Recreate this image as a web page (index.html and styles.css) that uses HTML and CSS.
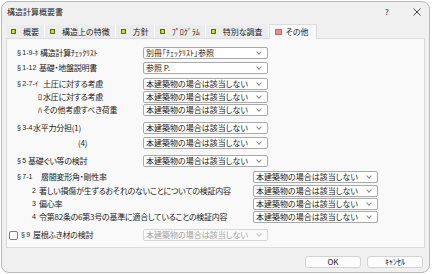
FILE: index.html
```html
<!DOCTYPE html>
<html lang="ja">
<head>
<meta charset="utf-8">
<link rel="stylesheet" href="styles.css">
</head>
<body>
<div class="window">
  <div class="titlebar">
    <span class="title">構造計算概要書</span>
    <span class="help">?</span>
    <span class="close">
      <svg width="8" height="8" viewBox="0 0 8 8"><path d="M0.5 0.5L7.5 7.5M7.5 0.5L0.5 7.5" stroke="#333" stroke-width="0.9" fill="none"/></svg>
    </span>
  </div>
  <div class="tabs">
    <div class="tab"><i class="ico"></i>概要</div>
    <div class="tab"><i class="ico"></i>構造上の特徴</div>
    <div class="tab"><i class="ico"></i>方針</div>
    <div class="tab"><i class="ico"></i>ﾌﾟﾛｸﾞﾗﾑ</div>
    <div class="tab"><i class="ico"></i>特別な調査</div>
    <div class="tab active"><i class="ico red"></i>その他</div>
  </div>
  <div class="panel">
    <div class="row">
      <div class="label"><span class="sec s23">§ 1-9-ﾎ</span>構造計算ﾁｪｯｸﾘｽﾄ</div>
      <div class="select"><span>別冊「ﾁｪｯｸﾘｽﾄ」参照</span></div>
    </div>
    <div class="row mt3">
      <div class="label"><span class="sec s22">§ 1-12</span>基礎・地盤説明書</div>
      <div class="select"><span>参照 P.</span></div>
    </div>
    <div class="row mt4">
      <div class="label"><span class="sec s26">§ 2-7-ｲ</span>土圧に対する考慮</div>
      <div class="select"><span>本建築物の場合は該当しない</span></div>
    </div>
    <div class="row mt1">
      <div class="label"><span class="sec sub">ﾛ</span>水圧に対する考慮</div>
      <div class="select"><span>本建築物の場合は該当しない</span></div>
    </div>
    <div class="row mt1">
      <div class="label"><span class="sec sub">ﾊ</span>その他考慮すべき荷重</div>
      <div class="select"><span>本建築物の場合は該当しない</span></div>
    </div>
    <div class="row mt6">
      <div class="label"><span class="sec s16">§ 3-4</span>水平力分担(1)</div>
      <div class="select"><span>本建築物の場合は該当しない</span></div>
    </div>
    <div class="row mt3">
      <div class="label"><span class="paren">(4)</span></div>
      <div class="select"><span>本建築物の場合は該当しない</span></div>
    </div>
    <div class="row mt6">
      <div class="label"><span class="sec s11">§ 5</span>基礎ぐい等の検討</div>
      <div class="select"><span>本建築物の場合は該当しない</span></div>
    </div>
    <div class="row mt4">
      <div class="label wide"><span class="sec s24">§ 7-1</span>層間変形角・剛性率</div>
      <div class="select"><span>本建築物の場合は該当しない</span></div>
    </div>
    <div class="row mt2">
      <div class="label wide"><span class="sec num">2</span>著しい損傷が生ずるおそれのないことについての検証内容</div>
      <div class="select"><span>本建築物の場合は該当しない</span></div>
    </div>
    <div class="row mt1">
      <div class="label wide"><span class="sec num">3</span>偏心率</div>
      <div class="select"><span>本建築物の場合は該当しない</span></div>
    </div>
    <div class="row mt1">
      <div class="label wide"><span class="sec num">4</span>令第82条の6第3号の基準に適合していることの検証内容</div>
      <div class="select"><span>本建築物の場合は該当しない</span></div>
    </div>
    <div class="row check mt6">
      <div class="label boxed"><span class="checkbox"></span><span class="sec s12">§ 9</span>屋根ふき材の検討</div>
      <div class="select disabled"><span>本建築物の場合は該当しない</span></div>
    </div>
  </div>
  <div class="footer">
    <div class="button">OK</div>
    <div class="button">ｷｬﾝｾﾙ</div>
  </div>
</div>
</body>
</html>
```

FILE: styles.css
```css
* { box-sizing: border-box; }
html, body { margin: 0; padding: 0; background: #ffffff; }
body {
  font-family: "Noto Sans CJK JP", "Noto Sans", sans-serif;
  font-size: 8px;
  color: #1b1b1b;
  font-feature-settings: "palt";
}
.window {
  width: 429px;
  height: 272px;
  margin: 1px 0 0 1px;
  border: 1px solid #b9b9b9;
  border-radius: 8px;
  background: #f0f0f0;
  display: flex;
  flex-direction: column;
  overflow: hidden;
}
.titlebar {
  height: 19px;
  display: flex;
  align-items: center;
  padding-left: 5px;
  flex-shrink: 0;
}
.title { flex: 1; line-height: 12px; }
.help { width: 8px; margin-right: 22px; text-align: center; line-height: 12px; }
.close { width: 8px; height: 8px; margin-right: 8px; display: flex; }
.tabs {
  display: flex;
  align-items: flex-end;
  margin: 4px 0 0 4px;
  height: 13px;
  position: relative;
  z-index: 1;
}
.tab {
  height: 13px;
  display: flex;
  align-items: center;
  padding: 0 5px 0 5px;
  gap: 7px;
  line-height: 12px;
  background: #ececec;
  border-right: 1px solid #fbfbfb;
}
.tab.active {
  height: 15px;
  background: #f9f9f9;
  border: 1px solid #dcdcdc;
  border-bottom: none;
  margin-bottom: -1px;
  padding: 0 7px 0 5px;
  gap: 4px;
}
.ico {
  display: block;
  width: 5px;
  height: 5px;
  background: #c2dc3a;
  border: 1px solid #5d6b18;
}
.ico.red {
  width: 7px;
  height: 6px;
  background: #f28b8b;
  border: 1px solid #d46060;
}
.panel {
  margin: 0 4px;
  height: 210px;
  background: #f9f9f9;
  border: 1px solid #dcdcdc;
  padding-top: 8px;
  display: flex;
  flex-direction: column;
}
.row {
  display: flex;
  align-items: center;
  height: 12px;
  padding-left: 10px;
}
.mt1 { margin-top: 1px; }
.mt2 { margin-top: 2px; }
.mt3 { margin-top: 3px; }
.mt4 { margin-top: 4px; }
.mt6 { margin-top: 6px; }
.label {
  width: 126px;
  display: flex;
  align-items: center;
  white-space: nowrap;
  line-height: 12px;
  letter-spacing: -0.25px;
}
.label.wide { width: 236px; }
.row.check { padding-left: 2px; }
.label.boxed { width: 134px; }
.sec {
  display: inline-block;
  flex-shrink: 0;
  font-family: "Liberation Sans", "Noto Sans CJK JP", sans-serif;
  font-size: 7px;
  letter-spacing: 0;
  word-spacing: -0.5px;
}
.s11 { width: 11px; }
.s12 { width: 12px; }
.s16 { width: 16px; }
.s22 { width: 22px; }
.s23 { width: 23px; }
.s24 { width: 24px; }
.s26 { width: 26px; }
.sub { width: 26px; padding-left: 21px; font-family: "Noto Sans CJK JP", sans-serif; font-size: 8px; }
.num { width: 22px; padding-left: 15px; }
.paren { padding-left: 61px; }
.checkbox {
  width: 9px;
  height: 9px;
  border: 1px solid #7c7c7c;
  border-radius: 2px;
  background: #ffffff;
  margin-right: 3px;
  flex-shrink: 0;
}
.select {
  width: 125px;
  height: 12px;
  border: 1px solid #a9a9a9;
  border-radius: 2px;
  background: #ffffff;
  display: flex;
  align-items: center;
  justify-content: space-between;
  padding: 0 6px 0 2px;
  line-height: 10px;
  white-space: nowrap;
}
.select::after {
  content: "";
  width: 3px;
  height: 3px;
  border-right: 1px solid #8a8a8a;
  border-bottom: 1px solid #8a8a8a;
  transform: translateY(-1px) rotate(45deg);
}
.select.disabled {
  border-color: #d6d6d6;
  background: #fafafa;
  color: #a2a2a2;
}
.select.disabled::after { border-color: #c4c4c4; }
.footer {
  display: flex;
  justify-content: flex-end;
  gap: 6px;
  margin: 8px 6px 0 0;
}
.button {
  width: 56px;
  height: 12px;
  border: 1px solid #d3d3d3;
  border-radius: 3px;
  background: #fdfdfd;
  display: flex;
  align-items: center;
  justify-content: center;
  line-height: 10px;
}
```
